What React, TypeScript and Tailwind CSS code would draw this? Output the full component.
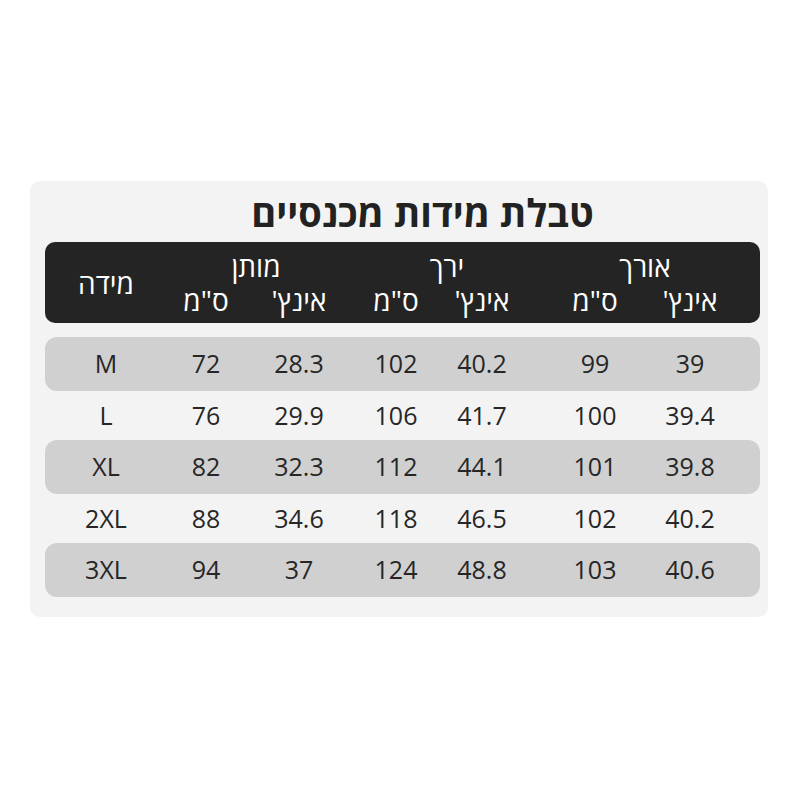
import React from "react"

type Row = { size: string; waistCm: string; waistIn: string; thighCm: string; thighIn: string; lenCm: string; lenIn: string }

const rows: Row[] = [
  { size: "M", waistCm: "72", waistIn: "28.3", thighCm: "102", thighIn: "40.2", lenCm: "99", lenIn: "39" },
  { size: "L", waistCm: "76", waistIn: "29.9", thighCm: "106", thighIn: "41.7", lenCm: "100", lenIn: "39.4" },
  { size: "XL", waistCm: "82", waistIn: "32.3", thighCm: "112", thighIn: "44.1", lenCm: "101", lenIn: "39.8" },
  { size: "2XL", waistCm: "88", waistIn: "34.6", thighCm: "118", thighIn: "46.5", lenCm: "102", lenIn: "40.2" },
  { size: "3XL", waistCm: "94", waistIn: "37", thighCm: "124", thighIn: "48.8", lenCm: "103", lenIn: "40.6" },
]

const font = { fontFamily: '"Open Sans", "DejaVu Sans", sans-serif' }

// columns measured from the left edge of the rows
const cols = "grid grid-cols-[122px_78px_108px_86px_86px_140px_50px_1fr]"

function Cell({ children }: { children: React.ReactNode }) {
  return <div className="flex justify-center whitespace-nowrap">{children}</div>
}

export default function App() {
  return (
    <div className="min-h-[800px] w-[800px] bg-white pt-[181px] pl-[30px]" style={font}>
      <div className="w-[738px] h-[436px] rounded-[10px] bg-[#f3f3f3] pl-[15px] pr-[8px]">
        {/* Title */}
        <div className="h-[61px] flex items-center justify-center pl-[40px]">
          <h1 dir="rtl" className="text-[38px] font-bold text-[#222] leading-none">
            טבלת מידות מכנסיים
          </h1>
        </div>

        {/* Header */}
        <div className="h-[81px] rounded-[10px] bg-[#242424] flex items-center text-white text-[28px]">
          <div className="w-[122px] flex justify-center" dir="rtl">מידה</div>
          <div className="flex-1 flex flex-col">
            <div className="grid grid-cols-[178px_204px_192px] leading-[34px]">
              <div dir="rtl" className="flex justify-center">מותן</div>
              <div dir="rtl" className="flex justify-center">ירך</div>
              <div dir="rtl" className="flex justify-center">אורך</div>
            </div>
            <div className="grid grid-cols-[78px_108px_86px_86px_140px_50px] leading-[34px]">
              <div dir="rtl" className="flex justify-center whitespace-nowrap">ס"מ</div>
              <div dir="rtl" className="flex justify-center whitespace-nowrap">אינץ'</div>
              <div dir="rtl" className="flex justify-center whitespace-nowrap">ס"מ</div>
              <div dir="rtl" className="flex justify-center whitespace-nowrap">אינץ'</div>
              <div dir="rtl" className="flex justify-center whitespace-nowrap">ס"מ</div>
              <div dir="rtl" className="flex justify-center whitespace-nowrap">אינץ'</div>
            </div>
          </div>
        </div>

        {/* Rows */}
        <div className="mt-[14px] flex flex-col text-[25px] text-[#262626]">
          {rows.map((r, i) => (
            <div
              key={r.size}
              className={[
                cols,
                "items-center",
                i % 2 === 0 ? "h-[54px] rounded-[12px] bg-[#d0d0d0]" : "h-[49px]",
              ].join(" ")}
            >
              <Cell>{r.size}</Cell>
              <Cell>{r.waistCm}</Cell>
              <Cell>{r.waistIn}</Cell>
              <Cell>{r.thighCm}</Cell>
              <Cell>{r.thighIn}</Cell>
              <Cell>{r.lenCm}</Cell>
              <Cell>{r.lenIn}</Cell>
              <div />
            </div>
          ))}
        </div>
      </div>
    </div>
  )
}
